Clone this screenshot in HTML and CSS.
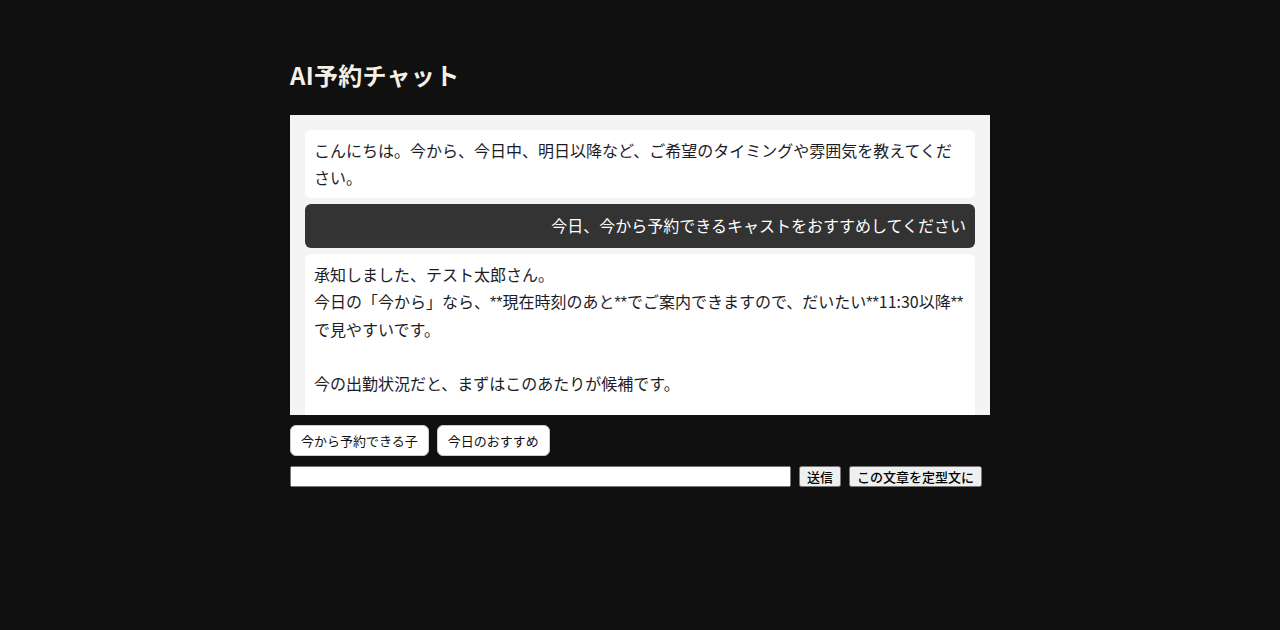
FILE: index.html
```html
<!DOCTYPE html>
<html lang="ja">
<head>
<meta charset="utf-8">
<title>AI予約チャット</title>
<link rel="stylesheet" href="styles.css">
</head>
<body>
<div class="page">
  <h1 class="title">AI予約チャット</h1>
  <div class="chat">
    <div class="msg bot">こんにちは。今から、今日中、明日以降など、ご希望のタイミングや雰囲気を教えてください。</div>
    <div class="msg user">今日、今から予約できるキャストをおすすめしてください</div>
    <div class="msg bot">承知しました、テスト太郎さん。
今日の「今から」なら、<span class="ast">**</span>現在時刻のあと<span class="ast">**</span>でご案内できますので、だいたい<span class="ast">**</span>11:30以降<span class="ast">**</span>で見やすいです。

今の出勤状況だと、まずはこのあたりが候補です。

- <span class="ast">**</span>候補1<span class="ast">**</span>：本日出勤中
- <span class="ast">**</span>候補2<span class="ast">**</span>：本日出勤中</div>
  </div>
  <div class="quick">
    <button class="chip">今から予約できる子</button>
    <button class="chip">今日のおすすめ</button>
  </div>
  <div class="inputrow">
    <input class="field" type="text">
    <button class="btn">送信</button>
    <button class="btn">この文章を定型文に</button>
  </div>
</div>
</body>
</html>
```
FILE: styles.css
```css
html, body {
  margin: 0;
  padding: 0;
  background: #111010;
}
body {
  font-family: "Noto Sans CJK JP", sans-serif;
}
.page {
  width: 700px;
  margin: 0 auto;
  padding-top: 57px;
}
.title {
  margin: 0 0 22px 0;
  font-size: 24px;
  line-height: 36px;
  font-weight: 700;
  letter-spacing: 0.3px;
  color: #f5f0e6;
  font-family: "Noto Sans CJK JP", sans-serif;
}
.chat {
  height: 300px;
  box-sizing: border-box;
  background: #f4f4f4;
  padding: 15px;
  overflow: hidden;
  display: flex;
  flex-direction: column;
  gap: 6px;
}
.msg {
  flex: none;
  font-family: "Noto Sans CJK JP", sans-serif;
  font-size: 16px;
  line-height: 1.7;
  padding: 7px 9px;
  border-radius: 6px;
  white-space: pre-wrap;
}
.msg.bot {
  background: #ffffff;
  color: #1c1c28;
}
.msg.user {
  background: #333333;
  color: #ffffff;
  text-align: right;
  padding: 8px 9px;
}
.ast {
  font-family: "Liberation Sans", sans-serif;
}
.quick {
  display: flex;
  gap: 8px;
  margin-top: 10px;
}
.chip {
  font-family: "Noto Sans CJK JP", sans-serif;
  font-size: 13px;
  line-height: 17px;
  padding: 6px 10px;
  background: #ffffff;
  color: #111;
  border: 1px solid #cccccc;
  border-radius: 6px;
}
.inputrow {
  display: flex;
  align-items: center;
  gap: 8px;
  margin-top: 10px;
}
.field {
  width: 501px;
  box-sizing: border-box;
  height: 21px;
  margin: 0;
}
.btn {
  font-family: "Noto Sans CJK JP", sans-serif;
  font-size: 13px;
  font-weight: 500;
  margin: 0;
  height: 21px;
  line-height: 15px;
  padding: 1px 6px;
}
```
